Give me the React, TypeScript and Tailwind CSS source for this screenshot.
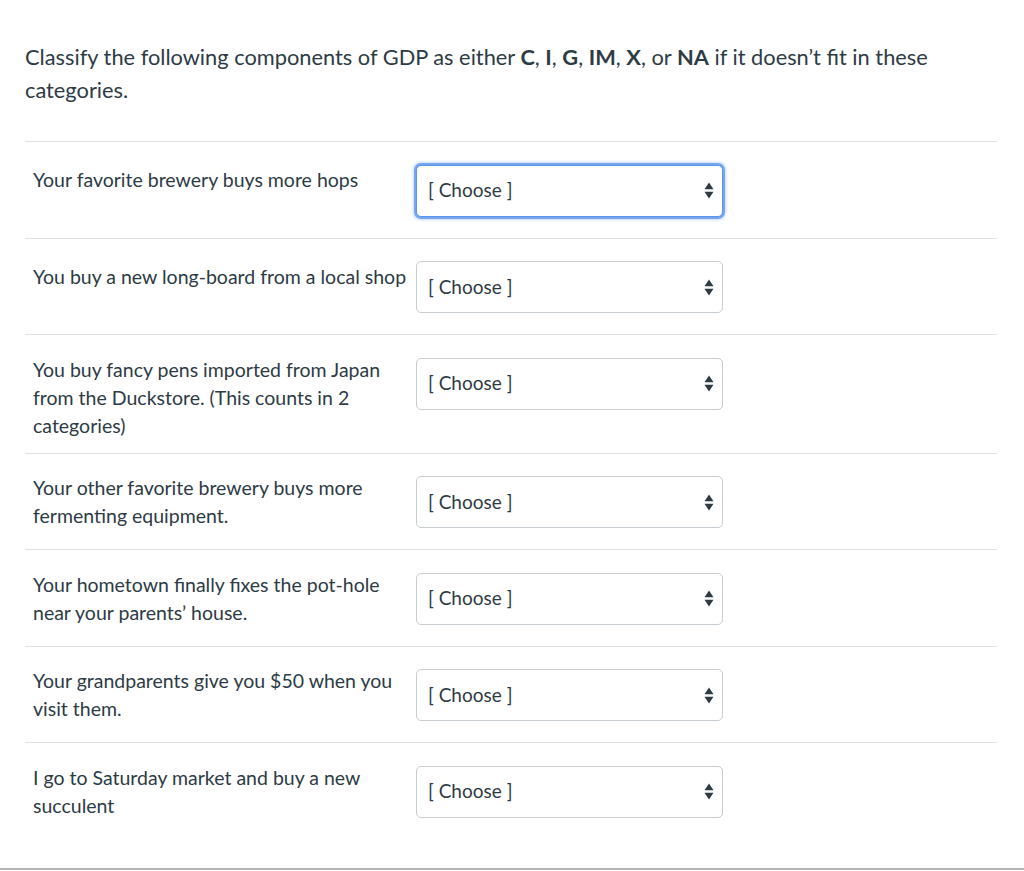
import React from 'react';

const ROWS: { text: string; oneLine?: boolean; focused?: boolean }[] = [
  { text: 'Your favorite brewery buys more hops', oneLine: true, focused: true },
  { text: 'You buy a new long-board from a local shop', oneLine: true },
  { text: 'You buy fancy pens imported from Japan from the Duckstore. (This counts in 2 categories)' },
  { text: 'Your other favorite brewery buys more fermenting equipment.' },
  { text: 'Your hometown finally fixes the pot-hole near your parents\u2019 house.' },
  { text: 'Your grandparents give you $50 when you visit them.' },
  { text: 'I go to Saturday market and buy a new succulent' },
];

function Arrows() {
  return (
    <svg width="10" height="17" viewBox="0 0 10 17" className="text-[#2d3b45]">
      <path d="M5 0.5 L9.5 7.2 L0.5 7.2 Z" fill="currentColor" />
      <path d="M5 16.5 L9.5 9.8 L0.5 9.8 Z" fill="currentColor" />
    </svg>
  );
}

function ChooseSelect({ focused }: { focused?: boolean }) {
  return (
    <div
      className={`flex items-center justify-between w-[307px] h-[52px] rounded-[5px] bg-white pl-[11px] pr-[8px] border ${
        focused
          ? 'border-[#5d95ec] ring-2 ring-[#76a6f0] shadow-[0_0_3px_3px_#c6daf8]'
          : 'border-[#c7cdd1]'
      }`}
    >
      <span className="text-[19px] text-[#2d3b45]">[ Choose ]</span>
      <Arrows />
    </div>
  );
}

export default function App() {
  return (
    <div
      className="min-h-[871px] bg-white flex flex-col text-[#2d3b45]"
      style={{ fontFamily: 'Lato, "Open Sans", sans-serif' }}
    >
      <div className="flex-1 pl-[25px] pr-[27px] pt-[40px]">
        <p className="text-[21.8px] leading-[33px] pr-4">
          Classify the following components of GDP as either <b>C</b>, <b>I</b>, <b>G</b>, <b>IM</b>, <b>X</b>, or <b>NA</b> if it doesn&rsquo;t fit in these categories.
        </p>
        <div className="mt-[35px] border-t border-[#dfe1e3]">
          {ROWS.map((row, i) => (
            <div
              key={i}
              className={`flex items-start ${i < ROWS.length - 1 ? 'border-b border-[#dfe1e3]' : ''}`}
            >
              <div
                className={`w-[391px] pl-[8px] pr-[4px] pb-[13px] text-[19.5px] leading-[28px] ${
                  row.oneLine ? 'pt-[24px]' : 'pt-[20.5px]'
                }`}
              >
                {row.text}
              </div>
              <div className="mt-[22.5px] mb-[21px]">
                <ChooseSelect focused={row.focused} />
              </div>
            </div>
          ))}
        </div>
      </div>
      <div className="h-[3px] border-t-2 border-[#b4b4b4] mt-auto" />
    </div>
  );
}
